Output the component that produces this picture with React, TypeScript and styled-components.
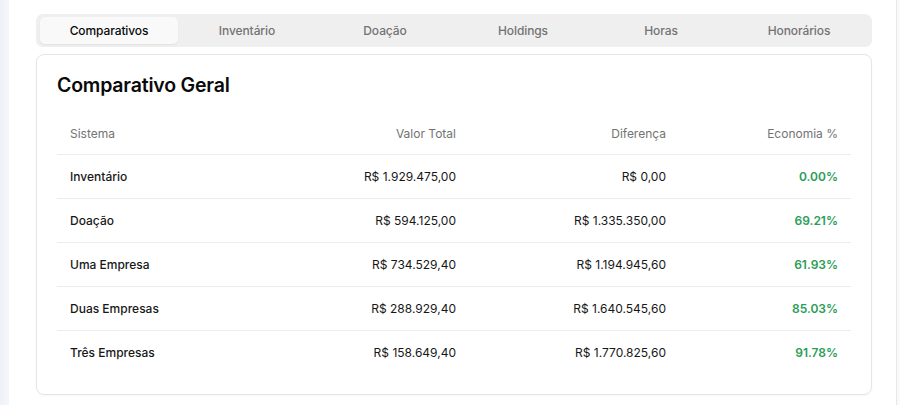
import React from "react";
import styled, { createGlobalStyle } from "styled-components";

const Global = createGlobalStyle`
  html, body { margin: 0; padding: 0; background: #ffffff; }
  body { font-family: Inter, "Noto Sans", sans-serif; color: #0a0a0a; -webkit-font-smoothing: antialiased; }
  * { box-sizing: border-box; }
`;

const Shell = styled.div`
  display: flex;
  width: 900px;
  height: 405px;
  overflow: hidden;
`;

const SideStrip = styled.div`
  width: 9px;
  flex-shrink: 0;
  background: linear-gradient(to right, #eef2f7, #f4f6fa);
`;

const Main = styled.main`
  flex: 1;
  background: #ffffff;
  padding: 14px 24px 0 27px;
  display: flex;
  flex-direction: column;
  gap: 7px;
`;

const RightStrip = styled.div`
  width: 4px;
  flex-shrink: 0;
  border-left: 1px solid #e8e8e8;
  background: #fafafa;
`;

const TabList = styled.div`
  display: grid;
  grid-template-columns: repeat(6, 1fr);
  height: 33px;
  padding: 3px 4px;
  border-radius: 7px;
  background: #efefef;
`;

const Tab = styled.button<{ $active?: boolean }>`
  border: none;
  border-radius: 5px;
  font-family: inherit;
  font-size: 12px;
  font-weight: 500;
  letter-spacing: -0.1px;
  cursor: pointer;
  color: ${(p) => (p.$active ? "#0a0a0a" : "#737373")};
  background: ${(p) => (p.$active ? "#f9f9f9" : "transparent")};
  box-shadow: ${(p) => (p.$active ? "0 1px 2px rgba(0,0,0,0.06)" : "none")};
`;

const Card = styled.section`
  border: 1px solid #e6e6e6;
  border-radius: 8px;
  box-shadow: 0 1px 2px rgba(0,0,0,0.04);
  padding: 18px 20px 20px 20px;
  height: 341px;
`;

const Title = styled.h2`
  margin: 0 0 16px 0;
  font-size: 19.5px;
  line-height: 24px;
  font-weight: 600;
  letter-spacing: -0.2px;
  color: #0a0a0a;
`;

const Table = styled.table`
  width: 100%;
  border-collapse: collapse;
  font-size: 12px;
`;

const HeadCell = styled.th<{ $align?: string }>`
  height: 41px;
  padding: 0 13px;
  font-weight: 400;
  color: #737373;
  text-align: ${(p) => p.$align || "left"};
`;

const Row = styled.tr`
  border-top: 1px solid #ececec;
`;

const Cell = styled.td<{ $align?: string; $strong?: boolean; $green?: boolean }>`
  height: 44px;
  padding: 0 13px;
  text-align: ${(p) => p.$align || "left"};
  font-weight: ${(p) => (p.$green ? 600 : p.$strong ? 500 : 400)};
  color: ${(p) => (p.$green ? "#2a9d57" : "#171717")};
`;

const tabs = ["Comparativos", "Inventário", "Doação", "Holdings", "Horas", "Honorários"];

const rows = [
  ["Inventário", "R$ 1.929.475,00", "R$ 0,00", "0.00%"],
  ["Doação", "R$ 594.125,00", "R$ 1.335.350,00", "69.21%"],
  ["Uma Empresa", "R$ 734.529,40", "R$ 1.194.945,60", "61.93%"],
  ["Duas Empresas", "R$ 288.929,40", "R$ 1.640.545,60", "85.03%"],
  ["Três Empresas", "R$ 158.649,40", "R$ 1.770.825,60", "91.78%"],
];

export default function App() {
  return (
    <>
      <Global />
      <Shell>
        <SideStrip />
        <Main>
          <TabList>
            {tabs.map((t, i) => (
              <Tab key={t} $active={i === 0}>
                {t}
              </Tab>
            ))}
          </TabList>
          <Card>
            <Title>Comparativo Geral</Title>
            <Table>
              <colgroup>
                <col style={{ width: 200 }} />
                <col style={{ width: 212 }} />
                <col style={{ width: 210 }} />
                <col style={{ width: 172 }} />
              </colgroup>
              <thead>
                <tr>
                  <HeadCell>Sistema</HeadCell>
                  <HeadCell $align="right">Valor Total</HeadCell>
                  <HeadCell $align="right">Diferença</HeadCell>
                  <HeadCell $align="right">Economia %</HeadCell>
                </tr>
              </thead>
              <tbody>
                {rows.map((r) => (
                  <Row key={r[0]}>
                    <Cell $strong>{r[0]}</Cell>
                    <Cell $align="right">{r[1]}</Cell>
                    <Cell $align="right">{r[2]}</Cell>
                    <Cell $align="right" $green>
                      {r[3]}
                    </Cell>
                  </Row>
                ))}
              </tbody>
            </Table>
          </Card>
        </Main>
        <RightStrip />
      </Shell>
    </>
  );
}
